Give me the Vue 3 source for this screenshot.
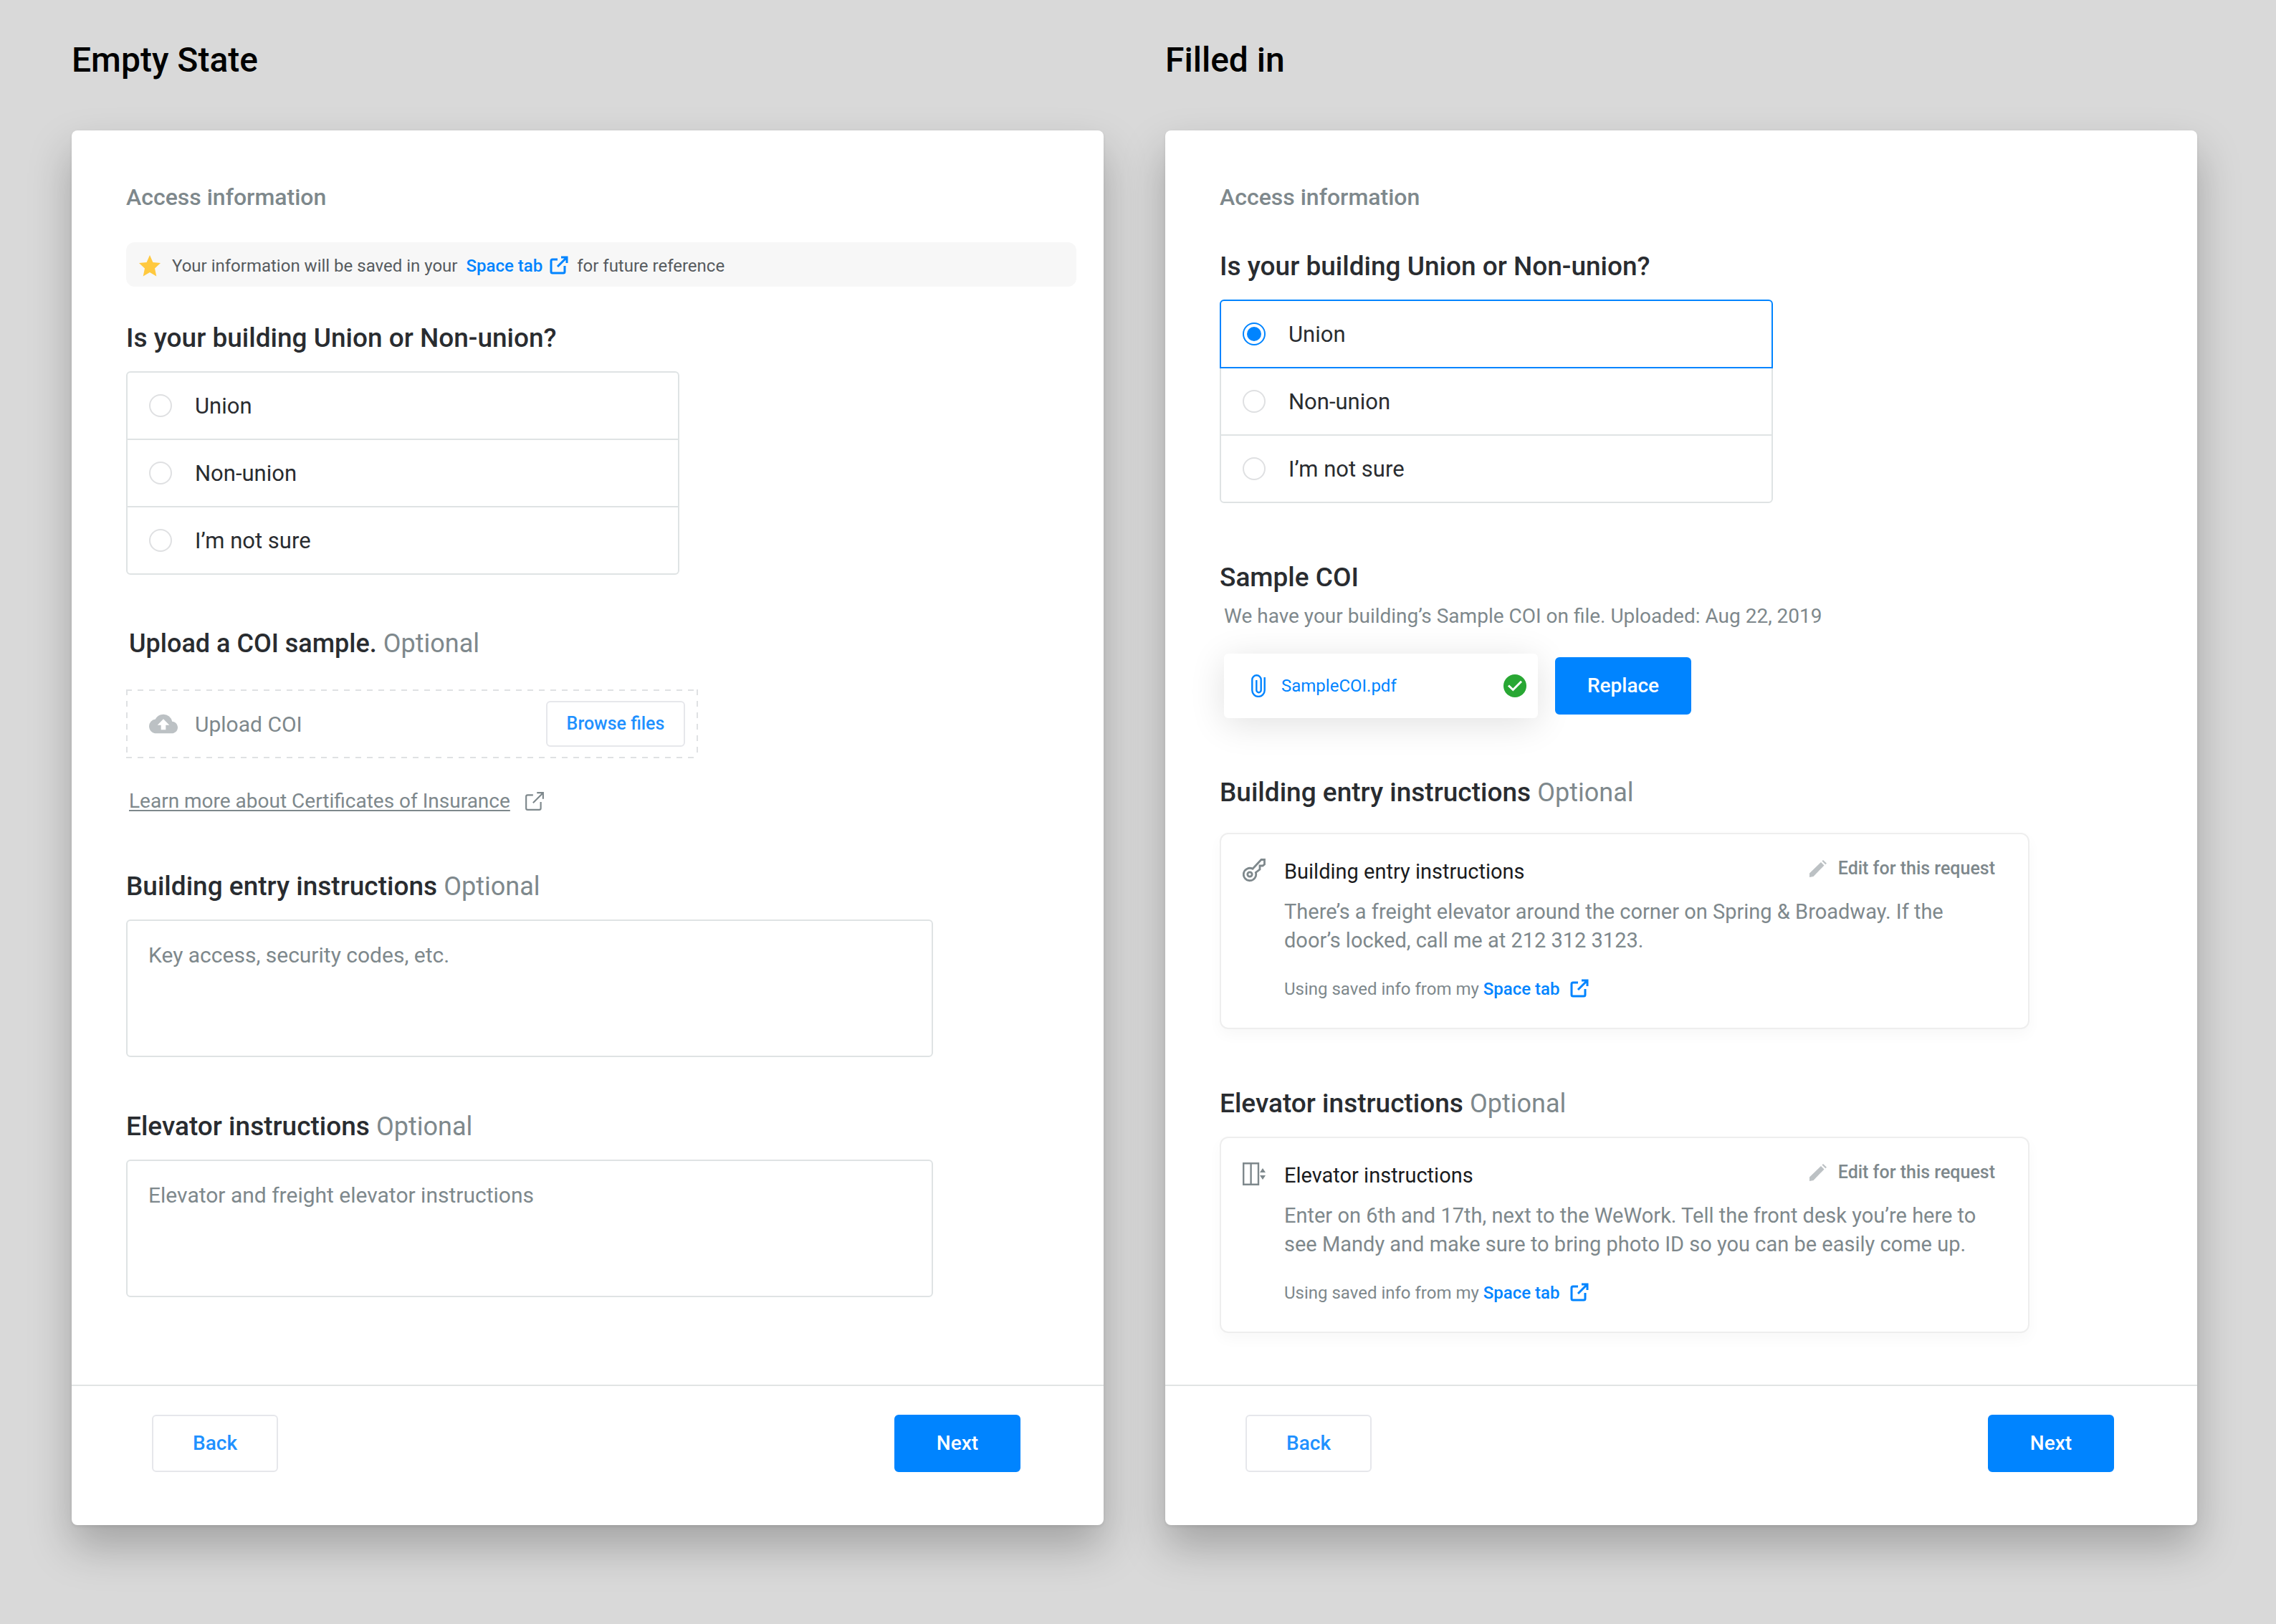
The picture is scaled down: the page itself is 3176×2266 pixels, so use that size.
<script setup>
import { h, ref } from 'vue'

const options = [
  { value: 'union', label: 'Union' },
  { value: 'non-union', label: 'Non-union' },
  { value: 'unsure', label: 'I’m not sure' }
]

const emptyChoice = ref('')
const filledChoice = ref('union')
const entryText = ref('')
const elevatorText = ref('')

const savedCards = [
  {
    id: 'entry',
    heading: 'Building entry instructions',
    text: 'There’s a freight elevator around the corner on Spring & Broadway. If the door’s locked, call me at 212 312 3123.'
  },
  {
    id: 'elevator',
    heading: 'Elevator instructions',
    text: 'Enter on 6th and 17th, next to the WeWork. Tell the front desk you’re here to see Mandy and make sure to bring photo ID so you can be easily come up.'
  }
]

// Arrow leaving a box, used beside links that open elsewhere
const ExternalIcon = (props) =>
  h(
    'svg',
    {
      viewBox: '0 0 26 26',
      fill: 'none',
      stroke: 'currentColor',
      'stroke-width': props.weight,
      'aria-hidden': 'true'
    },
    [
      h('path', { d: 'M11 5H4Q2 5 2 7V22Q2 24 4 24H19Q21 24 21 22V14' }),
      h('path', { d: 'M16 2H24V10M24 2L11 15' })
    ]
  )
ExternalIcon.props = ['weight']
</script>

<template>
  <main class="page">
    <section class="state">
      <h1 class="state-title">Empty State</h1>
      <form class="panel" @submit.prevent>
        <div class="panel-body">
          <p class="eyebrow">Access information</p>

          <p class="banner">
            <svg class="star" viewBox="0 0 30 30" aria-hidden="true">
              <path fill="#ffc93f" d="M15 0l4.4 9.9L30 11l-8 7.400 2.300 11.100L15 24l-9.300 5.500L8 18.400 0 11l10.600-1.100z" />
            </svg>
            <span>
              Your information will be saved in your
              <a class="space-link banner-link" href="#space">Space tab<ExternalIcon class="link-icon" weight="3" /></a>
              <span class="banner-tail">for future reference</span>
            </span>
          </p>

          <div class="question">
            <h2 id="union-empty" class="heading">Is your building Union or Non-union?</h2>
            <div class="options" role="radiogroup" aria-labelledby="union-empty">
              <label v-for="o in options" :key="o.value" class="option" :class="{ selected: emptyChoice === o.value }">
                <input v-model="emptyChoice" class="radio" type="radio" name="union-empty" :value="o.value" />
                {{ o.label }}
              </label>
            </div>
          </div>

          <div class="upload">
            <h2 class="heading heading-upload">Upload a COI sample. <span class="optional">Optional</span></h2>
            <div class="dropzone">
              <svg class="cloud" viewBox="0 4 24 16" aria-hidden="true">
                <path fill="#bcc1c4" d="M19.350 10.040A7.490 7.490 0 0 0 12 4C9.110 4 6.600 5.640 5.350 8.040A5.994 5.994 0 0 0 0 14c0 3.310 2.690 6 6 6h13c2.760 0 5-2.240 5-5 0-2.640-2.050-4.780-4.650-4.960zM14 13v4h-4v-4H7l5-5 5 5h-3z" />
              </svg>
              <span class="drop-label">Upload COI</span>
              <button class="button button-outline button-small" type="button">Browse files</button>
            </div>
            <p class="learn">
              <a href="#coi">Learn more about Certificates of Insurance</a>
              <ExternalIcon class="learn-icon" weight="2" />
            </p>
          </div>

          <div class="field">
            <label class="heading" for="entry">Building entry instructions <span class="optional">Optional</span></label>
            <textarea id="entry" v-model="entryText" class="textarea" placeholder="Key access, security codes, etc."></textarea>
          </div>

          <div class="field">
            <label class="heading" for="elevator">Elevator instructions <span class="optional">Optional</span></label>
            <textarea id="elevator" v-model="elevatorText" class="textarea" placeholder="Elevator and freight elevator instructions"></textarea>
          </div>
        </div>
        <footer class="panel-footer">
          <button class="button button-outline" type="button">Back</button>
          <button class="button button-primary" type="submit">Next</button>
        </footer>
      </form>
    </section>

    <section class="state">
      <h1 class="state-title">Filled in</h1>
      <form class="panel panel-filled" @submit.prevent>
        <div class="panel-body">
          <p class="eyebrow">Access information</p>

          <div class="question">
            <h2 id="union-filled" class="heading">Is your building Union or Non-union?</h2>
            <div class="options" role="radiogroup" aria-labelledby="union-filled">
              <label v-for="o in options" :key="o.value" class="option" :class="{ selected: filledChoice === o.value }">
                <input v-model="filledChoice" class="radio" type="radio" name="union-filled" :value="o.value" />
                {{ o.label }}
              </label>
            </div>
          </div>

          <div class="sample">
            <h2 class="heading">Sample COI</h2>
            <div class="sample-detail">
              <p class="sample-note">We have your building’s Sample COI on file. Uploaded: Aug 22, 2019</p>
              <div class="sample-row">
                <div class="file">
                  <svg class="clip" viewBox="0 0 20 32" fill="none" stroke="#0084ff" stroke-width="2.400" aria-hidden="true">
                    <path d="M18.700 4V22.200a8.700 8.700 0 0 1-17.400 0V7.500a6.200 6.200 0 0 1 12.400 0V22a3.200 3.200 0 0 1-6.400 0V8" />
                  </svg>
                  <a class="file-name" href="#sample">SampleCOI.pdf</a>
                  <svg class="check" viewBox="0 0 32 32" fill="none" aria-hidden="true">
                    <circle cx="16" cy="16" r="16" fill="#28a733" />
                    <path d="M7 15.500L13.300 21.500L25 9.800" stroke="#fff" stroke-width="3" />
                  </svg>
                </div>
                <button class="button button-primary button-replace" type="button">Replace</button>
              </div>
            </div>
          </div>

          <div v-for="card in savedCards" :key="card.id" class="saved">
            <h2 class="heading">{{ card.heading }} <span class="optional">Optional</span></h2>
            <article class="card">
              <svg v-if="card.id === 'entry'" class="card-icon" viewBox="0 0 32 32" fill="none" stroke="#7e888c" stroke-width="2.800" aria-hidden="true">
                <path d="M14 14.300L26 1.500H30.500V8L28 10H24V15L18.300 19.400A8.700 8.700 0 1 1 14 14.300Z" />
                <circle cx="10" cy="22" r="3.200" />
              </svg>
              <svg v-else class="card-icon" viewBox="0 0 32 32" fill="none" stroke="#7e888c" stroke-width="2.400" aria-hidden="true">
                <path d="M1.200 1.200H22V30.800H1.200ZM11.600 1V31" />
                <path d="M24 14L28 8L32 14ZM24 18L28 24L32 18Z" fill="#7e888c" stroke="none" />
              </svg>
              <div class="card-main">
                <header class="card-head">
                  <h3 class="card-title">{{ card.heading }}</h3>
                  <button class="edit" type="button">
                    <svg class="pencil" viewBox="0 0 24 24" fill="#bcc1c4" aria-hidden="true">
                      <path d="M0 24V18.500L16 3L20.500 7.500L5.500 23ZM17.500 1.500L19 0L24 4.800L22.300 6.300Z" />
                    </svg>
                    Edit for this request
                  </button>
                </header>
                <p class="card-text">{{ card.text }}</p>
                <p class="card-note">
                  Using saved info from my
                  <a class="space-link" href="#space">Space tab<ExternalIcon class="link-icon card-link-icon" weight="3" /></a>
                </p>
              </div>
            </article>
          </div>
        </div>
        <footer class="panel-footer">
          <button class="button button-outline" type="button">Back</button>
          <button class="button button-primary" type="submit">Next</button>
        </footer>
      </form>
    </section>
  </main>
</template>

<style>
body {
  background: #d9d9d9;
}
</style>

<style scoped>
.page {
  --blue: #0084ff;
  --ink: #292c30;
  --muted: #7e888c;
  --line: #dfe3e4;
  box-sizing: border-box;
  min-height: 100vh;
  padding: 56px 110px 138px 100px;
  display: grid;
  grid-template-columns: 1fr 1fr;
  column-gap: 86px;
  background: #d9d9d9;
  color: var(--ink);
  font-family: Roboto, sans-serif;
}

.page *,
.page *::before {
  box-sizing: border-box;
}

h1,
h2,
h3,
p {
  margin: 0;
}

a {
  color: inherit;
}

.state {
  display: flex;
  flex-direction: column;
}

.state-title {
  margin-bottom: 70px;
  color: #000;
  font-size: 48px;
  font-weight: 500;
  line-height: 56px;
}

.panel {
  flex: 1;
  display: flex;
  flex-direction: column;
  background: #fff;
  border-radius: 8px;
  box-shadow: 0 30px 60px rgba(0, 0, 0, 0.25), 0 2px 4px rgba(0, 0, 0, 0.08);
}

.panel-body {
  flex: 1;
  padding: 73px 38px 72px 76px;
}

.eyebrow {
  color: var(--muted);
  font-size: 32px;
  font-weight: 500;
  line-height: 40px;
}

.banner {
  display: flex;
  align-items: center;
  gap: 16px;
  margin-top: 43px;
  padding: 17px 18px 13px;
  border-radius: 12px;
  background: #f7f7f7;
  color: #565b5f;
  font-size: 24px;
  line-height: 32px;
}

.star {
  width: 30px;
  height: 30px;
}

.space-link {
  color: var(--blue);
  font-weight: 500;
  text-decoration: none;
}

.banner-link {
  margin-left: 6px;
}

.link-icon {
  width: 26px;
  height: 26px;
  margin-left: 10px;
  vertical-align: -4px;
}

.card-link-icon {
  margin-left: 14px;
}

.banner-tail {
  margin-left: 12px;
}

.heading {
  display: block;
  margin-bottom: 22px;
  font-size: 37px;
  font-weight: 500;
  line-height: 48px;
}

.heading-upload {
  margin-bottom: 40px;
  padding-left: 4px;
  font-size: 36px;
}

.optional {
  color: var(--muted);
  font-size: 36px;
  font-weight: 400;
}

.question {
  margin-top: 48px;
}

.panel-filled .question {
  margin-top: 53px;
}

.options {
  width: 772px;
  max-width: 100%;
}

.option {
  position: relative;
  display: flex;
  align-items: center;
  gap: 32px;
  height: 96px;
  padding: 0 30px;
  border: 2px solid var(--line);
  font-size: 31px;
}

.option + .option {
  margin-top: -2px;
}

.option:first-child {
  border-radius: 6px 6px 0 0;
}

.option:last-child {
  border-radius: 0 0 6px 6px;
}

.option.selected {
  z-index: 1;
  border-color: var(--blue);
}

.radio {
  appearance: none;
  width: 32px;
  height: 32px;
  margin: 0;
  padding: 4px;
  border: 2px solid #dfe0e2;
  border-radius: 50%;
}

.radio:checked {
  border-color: var(--blue);
  background: var(--blue) content-box;
}

.upload {
  margin-top: 72px;
  padding-bottom: 2px;
}

.field {
  margin-top: 73px;
}

.dropzone {
  --dash: #dfe1e3 0 8px, transparent 8px 16px;
  display: flex;
  align-items: center;
  gap: 24px;
  width: 798px;
  max-width: 100%;
  height: 96px;
  padding: 0 18px 0 32px;
  background:
    repeating-linear-gradient(90deg, var(--dash)) top / 100% 2px no-repeat,
    repeating-linear-gradient(90deg, var(--dash)) bottom / 100% 2px no-repeat,
    repeating-linear-gradient(180deg, var(--dash)) left / 2px 100% no-repeat,
    repeating-linear-gradient(180deg, var(--dash)) right / 2px 100% no-repeat;
}

.cloud {
  width: 40px;
  height: 28px;
}

.drop-label {
  flex: 1;
  color: var(--muted);
  font-size: 30px;
}

.learn {
  display: flex;
  align-items: center;
  gap: 20px;
  margin-top: 40px;
  padding-left: 4px;
  color: var(--muted);
  font-size: 28px;
  line-height: 40px;
}

.learn a {
  text-decoration-thickness: 2px;
  text-underline-offset: 3px;
}

.learn-icon {
  width: 28px;
  height: 28px;
}

.textarea {
  display: block;
  width: 1126px;
  max-width: 100%;
  height: 192px;
  padding: 28px 29px;
  border: 2px solid var(--line);
  border-radius: 6px;
  background: #fff;
  color: var(--ink);
  font-family: inherit;
  font-size: 30px;
  line-height: 40px;
  resize: none;
}

.textarea::placeholder {
  color: var(--muted);
  opacity: 1;
}

.sample,
.saved {
  margin-top: 80px;
}

.sample .heading {
  margin-bottom: 10px;
}

.sample-detail {
  padding-left: 6px;
}

.sample-note {
  color: var(--muted);
  font-size: 28px;
  line-height: 40px;
}

.sample-row {
  display: flex;
  align-items: center;
  gap: 24px;
  margin-top: 32px;
}

.file {
  display: flex;
  align-items: center;
  gap: 22px;
  width: 438px;
  height: 90px;
  padding: 0 16px 0 38px;
  border-radius: 6px;
  background: #fff;
  box-shadow: 0 8px 50px rgba(0, 0, 0, 0.12);
}

.clip {
  width: 20px;
  height: 32px;
}

.file-name {
  flex: 1;
  color: var(--blue);
  font-size: 24px;
  text-decoration: none;
}

.check {
  width: 32px;
  height: 32px;
}

.card {
  display: flex;
  align-items: flex-start;
  gap: 26px;
  width: 1130px;
  max-width: 100%;
  padding: 32px 46px 38px 30px;
  border: 2px solid #eee;
  border-radius: 12px;
  box-shadow: 0 8px 20px rgba(0, 0, 0, 0.03);
}

.sample + .saved .heading {
  margin-bottom: 32px;
}

.card-icon {
  flex: none;
  width: 32px;
  height: 36px;
}

.card-main {
  flex: 1;
}

.card-head {
  display: flex;
  align-items: flex-start;
  justify-content: space-between;
}

.card-title {
  color: #1a1b1d;
  font-size: 29px;
  font-weight: 400;
  line-height: 40px;
}

.edit {
  display: flex;
  align-items: center;
  gap: 16px;
  padding: 0;
  border: 0;
  background: none;
  color: var(--muted);
  font: 500 25px/32px Roboto, sans-serif;
}

.pencil {
  width: 24px;
  height: 24px;
}

.card-text {
  margin-top: 16px;
  color: var(--muted);
  font-size: 29px;
  line-height: 40px;
}

.card-note {
  margin-top: 32px;
  color: var(--muted);
  font-size: 24px;
  line-height: 32px;
}

.panel-footer {
  display: flex;
  justify-content: space-between;
  padding: 40px 116px 74px 112px;
  border-top: 2px solid #e1e4e4;
}

.button {
  width: 176px;
  height: 80px;
  padding: 0;
  border: 2px solid transparent;
  border-radius: 6px;
  font: 500 28px/40px Roboto, sans-serif;
}

.button-outline {
  border-color: #e6e7eb;
  background: #fff;
  color: #1f91ff;
}

.button-primary {
  border-color: var(--blue);
  background: var(--blue);
  color: #fff;
}

.button-small {
  width: 194px;
  height: 64px;
  font-size: 25px;
}

.button-replace {
  width: 190px;
}
</style>
